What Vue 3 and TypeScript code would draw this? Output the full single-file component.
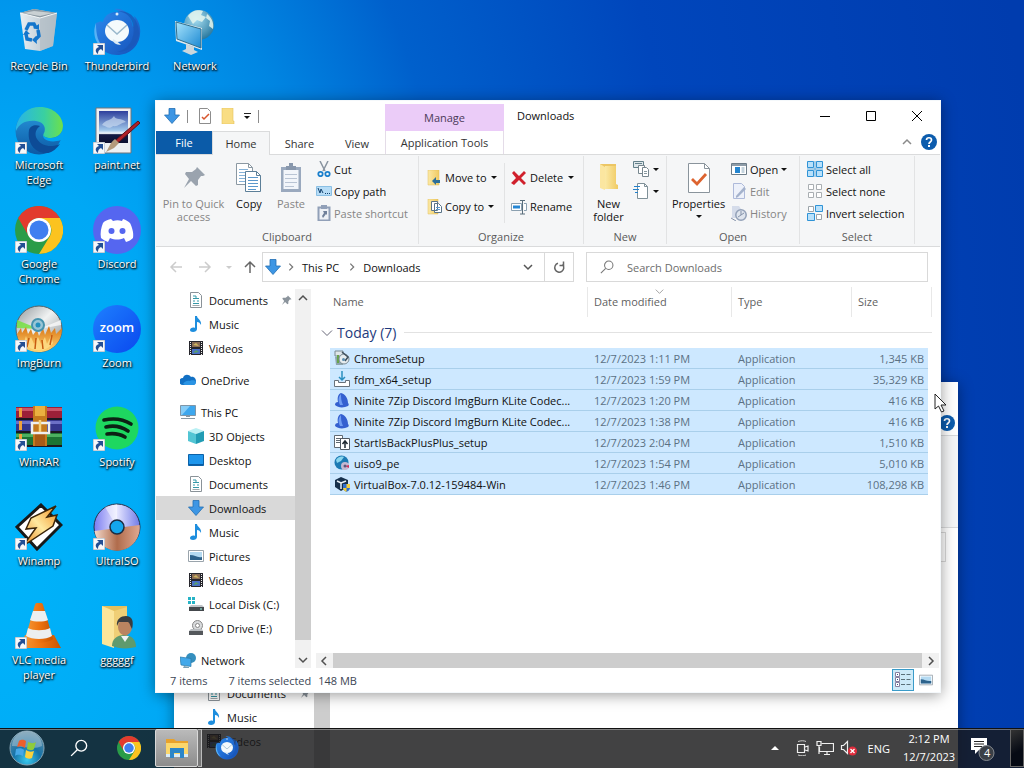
<script setup lang="ts">
import { ref } from 'vue'

interface Shortcut { icon: string; label: string; link: boolean; word?: string }
interface NavItem { icon: string; label: string; level: number; active?: boolean; pinned?: boolean; gap?: boolean }
interface FileRow { icon: string; name: string; date: string; size: string }

const shortcuts: Shortcut[] = [
  { icon: 'bin', label: 'Recycle Bin', link: false },
  { icon: 'edge', label: 'Microsoft Edge', link: true },
  { icon: 'chrome', label: 'Google Chrome', link: true },
  { icon: 'imgburn', label: 'ImgBurn', link: true },
  { icon: 'winrar', label: 'WinRAR', link: true },
  { icon: 'winamp', label: 'Winamp', link: true },
  { icon: 'vlc', label: 'VLC media player', link: true },
  { icon: 'thunderbird', label: 'Thunderbird', link: true },
  { icon: 'paint', label: 'paint.net', link: true },
  { icon: 'discord', label: 'Discord', link: true },
  { icon: 'zoom', label: 'Zoom', link: true, word: 'zoom' },
  { icon: 'spotify', label: 'Spotify', link: true },
  { icon: 'ultraiso', label: 'UltraISO', link: true },
  { icon: 'user', label: 'gggggf', link: false },
  { icon: 'network', label: 'Network', link: false },
]

const nav: NavItem[] = [
  { icon: 's-doc', label: 'Documents', level: 2, pinned: true },
  { icon: 's-music', label: 'Music', level: 2 },
  { icon: 's-video', label: 'Videos', level: 2 },
  { icon: 's-cloud', label: 'OneDrive', level: 1, gap: true },
  { icon: 's-pc', label: 'This PC', level: 1, gap: true },
  { icon: 's-cube', label: '3D Objects', level: 2 },
  { icon: 's-desktop', label: 'Desktop', level: 2 },
  { icon: 's-doc', label: 'Documents', level: 2 },
  { icon: 's-down', label: 'Downloads', level: 2, active: true },
  { icon: 's-music', label: 'Music', level: 2 },
  { icon: 's-pic', label: 'Pictures', level: 2 },
  { icon: 's-video', label: 'Videos', level: 2 },
  { icon: 's-disk', label: 'Local Disk (C:)', level: 2 },
  { icon: 's-cd', label: 'CD Drive (E:)', level: 2 },
  { icon: 's-net', label: 'Network', level: 1, gap: true },
]

const files: FileRow[] = [
  { icon: 'f-setup', name: 'ChromeSetup', date: '12/7/2023 1:11 PM', size: '1,345 KB' },
  { icon: 'f-fdm', name: 'fdm_x64_setup', date: '12/7/2023 1:59 PM', size: '35,329 KB' },
  { icon: 'f-ninite', name: 'Ninite 7Zip Discord ImgBurn KLite Codec...', date: '12/7/2023 1:20 PM', size: '416 KB' },
  { icon: 'f-ninite', name: 'Ninite 7Zip Discord ImgBurn KLite Codec...', date: '12/7/2023 1:38 PM', size: '416 KB' },
  { icon: 'f-start', name: 'StartIsBackPlusPlus_setup', date: '12/7/2023 2:04 PM', size: '1,510 KB' },
  { icon: 'f-iso', name: 'uiso9_pe', date: '12/7/2023 1:54 PM', size: '5,010 KB' },
  { icon: 'f-vbox', name: 'VirtualBox-7.0.12-159484-Win', date: '12/7/2023 1:46 PM', size: '108,298 KB' },
]

const query = ref('')
</script>

<template>
  <div class="desktop">
    <svg class="sprite" aria-hidden="true">
      <defs>
        <linearGradient id="gBin" x1="0" x2="1"><stop offset="0" stop-color="#e8eef2" /><stop offset="1" stop-color="#a9bac6" /></linearGradient>
        <linearGradient id="gEdgeA" x1="0" x2="1"><stop offset="0" stop-color="#28b4e8" /><stop offset=".6" stop-color="#3ad0a0" /><stop offset="1" stop-color="#6ee04a" /></linearGradient>
        <linearGradient id="gEdgeB" x1="0" y1="0" x2="0" y2="1"><stop offset="0" stop-color="#2a9be0" /><stop offset="1" stop-color="#0c59a4" /></linearGradient>
        <linearGradient id="gZoom" x1="0" y1="0" x2="1" y2="1"><stop offset="0" stop-color="#1e80ff" /><stop offset="1" stop-color="#0a48ee" /></linearGradient>
        <linearGradient id="gDisc" x1="0" x2="1" y1="0" y2="1"><stop offset="0" stop-color="#8d9498" /><stop offset=".45" stop-color="#f0f2f2" /><stop offset="1" stop-color="#7e8588" /></linearGradient>
        <linearGradient id="gFire" x1="0" x2="0" y1="0" y2="1"><stop offset="0" stop-color="#d9720f" /><stop offset="1" stop-color="#ffd878" /></linearGradient>
        <linearGradient id="gIsoA" x1="0" x2="1"><stop offset="0" stop-color="#7a7cf0" /><stop offset=".5" stop-color="#e6e6ff" /><stop offset="1" stop-color="#6f7ae8" /></linearGradient>
        <linearGradient id="gIsoB" x1="0" x2="1"><stop offset="0" stop-color="#f2d8ca" /><stop offset=".5" stop-color="#b06c4c" /><stop offset="1" stop-color="#e0a890" /></linearGradient>
        <linearGradient id="gBird" x1="0" x2="1" y1="0" y2="1"><stop offset="0" stop-color="#2c8cf0" /><stop offset="1" stop-color="#1550b8" /></linearGradient>
        <linearGradient id="gScreen" x1="0" x2="1" y1="0" y2="1"><stop offset="0" stop-color="#a8e4fc" /><stop offset="1" stop-color="#1a88d2" /></linearGradient>
        <linearGradient id="gBolt" x1="0" x2="1" y1="1" y2="0"><stop offset="0" stop-color="#e8851e" /><stop offset=".5" stop-color="#ffe9a0" /><stop offset="1" stop-color="#f09022" /></linearGradient>
        <linearGradient id="gCone" x1="0" x2="1"><stop offset="0" stop-color="#f59a3a" /><stop offset=".5" stop-color="#ee7410" /><stop offset="1" stop-color="#c85400" /></linearGradient>
        <linearGradient id="gPaint" x1="0" x2="0" y1="0" y2="1"><stop offset="0" stop-color="#2e3f9c" /><stop offset=".6" stop-color="#9fc6ea" /><stop offset=".7" stop-color="#f4f8fc" /><stop offset=".74" stop-color="#141a44" /><stop offset="1" stop-color="#0c1030" /></linearGradient>
        <linearGradient id="gFolder" x1="0" x2="1"><stop offset="0" stop-color="#fbe9a6" /><stop offset="1" stop-color="#f0ca62" /></linearGradient>
        <radialGradient id="gOrb" cx=".5" cy=".85" r=".8"><stop offset="0" stop-color="#39c9ee" /><stop offset=".5" stop-color="#1673a8" /><stop offset="1" stop-color="#5d8ba4" /></radialGradient>
        <radialGradient id="gGlobe" cx=".4" cy=".3" r=".8"><stop offset="0" stop-color="#a8e0f4" /><stop offset="1" stop-color="#1c6d94" /></radialGradient>
      </defs>

      <!-- desktop icons, 48 units square -->
      <symbol id="bin" viewBox="0 0 48 48">
        <path d="M5 5 19 1l23 4-4 33-13 5-15-2z" fill="url(#gBin)" />
        <path d="M5 5 19 1l23 4-17 5z" fill="#8e9ba4" /><path d="M8 5 19 3l19 2-13 3z" fill="#c9d0d3" />
        <path d="M25 10 42 5l-4 33-13 5z" fill="#b4bec4" opacity=".7" />
        <path d="M5 5l20 5 17-5" fill="none" stroke="#f4f7f9" />
        <path d="M11 22l3-6 5 0 2 4M23 22l1 6-4 4M17 32l-5-1-1-5" fill="none" stroke="#1476cc" stroke-width="3.500" />
        <path d="M18 20l6 2 0-6zM21 28l-4 4 5 4zM8 27l3-5 4 4z" fill="#1476cc" />
      </symbol>
      <symbol id="edge" viewBox="0 0 48 48">
        <circle cx="24" cy="24" r="23.500" fill="url(#gEdgeB)" />
        <path d="M1 20C4 7 13 0 25 0c14 0 23 10 23 19 0 8-6 12-12 12-6 0-8-2-7-5 2-4 1-11-8-12C10 13 4 17 1 24z" fill="url(#gEdgeA)" />
        <path d="M14 23c-2 12 5 24 19 23 5-1 9-5 12-9-9 4-19 2-23-5-3-5-1-10 3-13-5-2-10 0-11 4z" fill="#0d4b96" />
        <path d="M29 26c-4 6 6 11 17 7l2 2V19c0 8-6 12-12 12-6 0-8-2-7-5z" fill="#00a4f2" />
        <path d="M29 26c-2 3 1 5 7 5 5 0 10-3 12-9v-3c0 8-6 12-12 12-6 0-8-2-7-5z" fill="#55dc6a" />
      </symbol>
      <symbol id="chrome" viewBox="0 0 48 48">
        <circle cx="24" cy="24" r="24" fill="#2a9c48" />
        <path d="M3.200 12A24 24 0 0 1 44.800 12H24a12 12 0 0 0-11 7z" fill="#e23b2e" />
        <path d="M44.800 12A24 24 0 0 1 24 48l11-18a12 12 0 0 0-2-14l-9-4z" fill="#fcc31f" />
        <path d="M3.200 12 13.600 30A12 12 0 0 1 24 12z" fill="#e23b2e" />
        <circle cx="24" cy="24" r="12" fill="#fff" /><circle cx="24" cy="24" r="9.500" fill="#3f7ff0" />
      </symbol>
      <symbol id="imgburn" viewBox="0 0 48 48">
        <circle cx="24" cy="24" r="23" fill="url(#gDisc)" stroke="#5b6265" />
        <path d="M24 24 2 15v8z" fill="#6fe23a" opacity=".8" /><path d="M24 24 46 15v5z" fill="#fff" opacity=".7" />
        <path d="M2 29l4-6 1 5 4-6 2 7 3-5 2 6 4-5 2 6 4-8 2 7 4-9 2 7 4-5 1 6 6-6c0 14-10 24-23 24S4 40 2 29z" fill="url(#gFire)" />
        <path d="M9 37l2-6 2 6 3-5 3 7 4-7 3 7 4-7 2 7 4-8 2 7 2-3c-4 7-9 10-16 10S13 43 9 37z" fill="#ffdf88" opacity=".8" />
        <path d="M12 42l2-9M20 44l1-11M28 44l-1-9M35 40l2-10" stroke="#c85a10" stroke-width="1.500" fill="none" />
        <circle cx="23" cy="20" r="6" fill="#9ac6d6" stroke="#4693ae" stroke-width="2" /><circle cx="23" cy="20" r="2.500" fill="#2390be" />
      </symbol>
      <symbol id="winrar" viewBox="0 0 48 48">
        <path d="M1 3h46v12H1z" fill="#9c2038" /><path d="M1 4h46v3H1z" fill="#c9566a" />
        <path d="M1 16h46v12H1z" fill="#34378e" /><path d="M1 17h46v3H1z" fill="#6c70c6" />
        <path d="M1 29h46v13H1z" fill="#1c7434" /><path d="M1 30h46v3H1z" fill="#4cb060" />
        <path d="M1 14h46v2H1zM1 27h46v2H1zM1 41h46v2H1z" fill="#1c1820" />
        <path d="M4 4h3v9H4zM4 17h3v9H4zM4 30h3v9H4z" fill="#f0a23a" />
        <path d="M18 2h14v40H18z" fill="#c57a1e" /><path d="M20 2h10v10H20z" fill="#eab040" /><path d="M20 30h10v12H20z" fill="#a75b16" />
        <path d="M17 19h17v10H17z" fill="none" stroke="#eef0f2" stroke-width="2.500" /><path d="M25 16v12" stroke="#f6d27c" stroke-width="2.500" />
      </symbol>
      <symbol id="winamp" viewBox="0 0 48 48">
        <path d="M26 2 46 22 22 46 2 24z" fill="#fff" stroke="#181818" stroke-width="3" />
        <path d="M41 3 16 15l-5 11 10-1L8 43l30-20 4-11-10 2z" fill="url(#gBolt)" stroke="#3b2408" stroke-width="1.500" />
      </symbol>
      <symbol id="vlc" viewBox="0 0 48 48">
        <path d="M10 33h29l7 13H6z" fill="url(#gCone)" />
        <path d="M22 1h4c2 0 2 2 3 5l9 31c-6 5-22 5-28 0l9-31c1-3 1-5 3-5z" fill="url(#gCone)" />
        <path d="M18 9h12l3 9c-4 2-14 2-18 0zM13 26c5 3 17 3 22 0l2 8c-6 4-20 4-26 0z" fill="#eceff0" />
      </symbol>
      <symbol id="thunderbird" viewBox="0 0 48 48">
        <path d="M3 15c-4 16 4 32 21 32 13 0 22-9 23-21 1-8-2-15-6-18 2 7 0 10-1 11C38 6 30-1 21 1c5 1 5 3 5 3C15 3 11 9 10 14c-3-1-4 0-7 1z" fill="url(#gBird)" />
        <path d="M17 7C26 0 38 5 40 17c3 14-5 25-16 27 14 0 22-10 22-20C45 9 33-3 17 7z" fill="#1a57b8" opacity=".8" />
        <path d="M3 15c0 12 2 20 9 26C2 37-1 25 3 15z" fill="#58b2f6" />
        <ellipse cx="24" cy="23" rx="12" ry="11" fill="#f4fafc" /><path d="M20 31c4 2 6 4 8 6-5 0-9-3-8-6z" fill="#dcebf4" />
        <path d="M14 17l10 9 10-9" fill="none" stroke="#9ab8cc" stroke-width="1.500" /><circle cx="24" cy="6" r="1.500" fill="#d7ecfb" />
      </symbol>
      <symbol id="paint" viewBox="0 0 48 48">
        <path d="M3 1h35v45H3z" fill="#eef0f2" stroke="#70757a" /><path d="M6 4h29v32H6z" fill="url(#gPaint)" />
        <path d="M9 18c4-6 9-4 12-9 2 5 7 1 12 6-6 1-8 5-13 4-4 4-7 0-11-1z" fill="#c8d8f0" opacity=".7" />
        <path d="M45 14 24 32l-3 4 5-1 21-19z" fill="#b02028" stroke="#5f1018" /><path d="M22 32l4 4-5 5-8 4c3-4 3-8 9-13z" fill="#b49a7c" />
      </symbol>
      <symbol id="discord" viewBox="0 0 48 48">
        <circle cx="24" cy="24" r="24" fill="#5566f0" />
        <path d="M18 13c-4 1-7 2-8 4-2 5-3 10-2 15 2 2 5 3 7 4l2-4c5 2 9 2 14 0l2 4c3-1 5-2 7-4 1-5-1-11-3-15-2-2-4-3-7-4l-1 2c-3-1-6-1-9 0z" fill="#fff" />
        <circle cx="18.500" cy="25" r="3" fill="#5566f0" /><circle cx="29.500" cy="25" r="3" fill="#5566f0" />
      </symbol>
      <symbol id="zoom" viewBox="0 0 48 48"><circle cx="24" cy="24" r="24" fill="url(#gZoom)" /></symbol>
      <symbol id="spotify" viewBox="0 0 48 48">
        <circle cx="24" cy="24" r="21.500" fill="#1ed760" />
        <path d="M11 16c9-2 19-1 27 4M13 23c8-2 16 0 22 4M14 30c7-1 13 0 18 3" fill="none" stroke="#0c2014" stroke-width="3.600" stroke-linecap="round" />
      </symbol>
      <symbol id="ultraiso" viewBox="0 0 48 48">
        <circle cx="24" cy="24" r="23" fill="url(#gIsoA)" stroke="#28324a" />
        <path d="M46.500 22a22.500 22.500 0 0 1-45 6z" fill="url(#gIsoB)" /><path d="M24 24 12 4l12-3z" fill="#fff" opacity=".5" />
        <circle cx="24" cy="24" r="7" fill="#14a6ec" stroke="#1d2c40" stroke-width="1.500" />
      </symbol>
      <symbol id="user" viewBox="0 0 48 48">
        <path d="M9 4h25v38H12z" fill="#e5bf5c" /><path d="M9 4l12 5v37L9 42z" fill="#fbe59a" /><path d="M21 9l13-4v37H21z" fill="#f0cf76" />
        <path d="M19 44c0-7 5-11 12-11s12 4 12 12c-8 2-17 2-24-1z" fill="#5f9a6e" /><path d="M28 34l4 6 4-6z" fill="#eef3f4" />
        <ellipse cx="32" cy="25" rx="7" ry="8.500" fill="#b98460" /><path d="M24 24c-1-7 4-10 9-10 6 0 8 5 6 13-2-3-2-6-4-7-4 0-8 0-9 0z" fill="#3a3d40" />
      </symbol>
      <symbol id="network" viewBox="0 0 48 48">
        <circle cx="28" cy="17" r="15" fill="url(#gGlobe)" />
        <path d="M17 8c5-7 12-6 15-5l-2 4 5 2-4 5-5-2-4 4zM36 6c5 4 7 9 6 15l-4-3 1-5-4-3z" fill="#e4f6ee" opacity=".85" />
        <path d="M4 13l27 7v22L5 33z" fill="#dfe9ee" /><path d="M5 14l25 7v19L6 31z" fill="url(#gScreen)" stroke="#31708e" />
        <path d="M15 36l8 3v3l4 2-7 3-9-4 4-2z" fill="#cdd7dc" />
      </symbol>
      <symbol id="arrow-badge" viewBox="0 0 12 12">
        <path d="M0 0h12v12H0z" fill="#f6f8fa" stroke="#9ba7b4" />
        <path d="M4 2h6v6L8 6c-2 1-3 2-3 5C1 8 3 5 6 4z" fill="#234f94" />
      </symbol>

      <!-- navigation and title icons, 16 units square -->
      <symbol id="s-doc" viewBox="0 0 16 16"><path d="M2.500.500h8l3 3v12h-11z" fill="#fff" stroke="#8a9298" /><path d="M5 4h3M5 6.500h6M5 9h2m2 0h2M5 11.500h6M8 4v3" stroke="#3498a8" fill="none" /><path d="M4.500 13.500h7" stroke="#a0a8ac" /></symbol>
      <symbol id="s-music" viewBox="0 0 16 16"><path d="M7 0h2c0 3 5 4 4 9-1-2-2-3-4-3v7c0 2-2 3-4 3s-3-1-3-2c0-2 3-3 5-2z" fill="#1e8ede" /></symbol>
      <symbol id="s-video" viewBox="0 0 16 16"><path d="M1 1h14v14H1z" fill="#26262c" /><path d="M4 2h8v5H4z" fill="#8a6c54" /><path d="M4 9h8v5H4z" fill="#4a70c8" /><path d="M5 5l3-2 3 3z" fill="#d0b860" /><path d="M5 13l3-3 3 2z" fill="#58a068" /><path d="M2.500 2v13M13.500 2v13" stroke="#eee" stroke-dasharray="1 1" /></symbol>
      <symbol id="s-cloud" viewBox="0 0 16 16"><path d="M3 13a3.500 3.500 0 0 1 0-7c1-4 6-4 8-1 3-1 5 2 5 4s-1 4-3 4z" fill="#1170c4" /><path d="M5 13h8c2 0 3-1 3-3-2-3-6-1-6-1-3-1-6 1-7 3z" fill="#2a94e4" /></symbol>
      <symbol id="s-pc" viewBox="0 0 16 16"><path d="M.500 1.500h15v10H.500z" fill="#3da7ee" stroke="#7f96a8" /><path d="M1 2h9L2 11H1z" fill="#86cdf8" /><path d="M1 14.500h14M6 12.500h4" stroke="#8899a4" /></symbol>
      <symbol id="s-cube" viewBox="0 0 16 16"><path d="M0 3l8-3 8 3-8 3z" fill="#b9f0f4" /><path d="M0 3l8 3v10L0 13z" fill="#52c5d4" /><path d="M16 3 8 6v10l8-3z" fill="#219cb4" /></symbol>
      <symbol id="s-desktop" viewBox="0 0 16 16"><path d="M.500 2.500h15v11H.500z" fill="#1e96ec" stroke="#0c62a8" /><path d="M1 12.500h14" stroke="#0a5ca4" /></symbol>
      <symbol id="s-down" viewBox="0 0 16 16"><path d="M5 .500h6V7h4.500L8 15.500.500 7H5z" fill="#3d96e4" stroke="#226fb4" stroke-width=".8" /></symbol>
      <symbol id="s-pic" viewBox="0 0 16 16"><path d="M.500 2.500h15v11H.500z" fill="#fff" stroke="#9aa4ac" /><path d="M2 4h12v8H2z" fill="#b4daf2" /><path d="M2 7c5 0 7 3 12 2v3H2z" fill="#2e638c" /></symbol>
      <symbol id="s-disk" viewBox="0 0 16 16"><path d="M0 1h3v3H0zM4 1h3v3H4zM0 5h3v3H0zM4 5h3v3H4z" fill="#26b3c6" /><path d="M3 9h11l2 2H1z" fill="#c0c4c8" /><path d="M1 11h15v4H1z" fill="#44484c" /><path d="M12 13h2" stroke="#9fe" /></symbol>
      <symbol id="s-cd" viewBox="0 0 16 16"><circle cx="9.500" cy="5.500" r="5" fill="#d8dadc" stroke="#888" /><circle cx="9.500" cy="5.500" r="2" fill="#fff" stroke="#888" /><path d="M3 9h11l1 2H1z" fill="#b8bcc0" /><path d="M1 11h14v4H1z" fill="#54585c" /></symbol>
      <symbol id="s-net" viewBox="0 0 16 16"><circle cx="11" cy="6" r="5" fill="#358fbe" /><path d="M0 5l11 1.500v8L1 13z" fill="#42a8ea" stroke="#2a78a8" stroke-width=".7" /><path d="M4 14l5 1v1H3z" fill="#7ba0b4" /></symbol>
      <symbol id="pin" viewBox="0 0 24 24"><path d="M15 1l8 8-2 1-2 0-3 4 0 5-2 1-5-5-7 7 5-9-4-5 1-2 6 0 4-3z" fill="currentColor" /></symbol>

      <!-- ribbon icons -->
      <symbol id="copy" viewBox="0 0 26 30"><path d="M.500.500h12l4 4v17H.500z" fill="#fff" stroke="#8b98a2" /><path d="M12.500.500v4h4" fill="none" stroke="#8b98a2" /><path d="M3 6.500h9M3 9.500h11M3 12.500h6M3 15.500h6M3 18.500h6" stroke="#85b2d8" /><path d="M9.500 8.500h11l4 4v16h-15z" fill="#fff" stroke="#5c7f98" /><path d="M20.500 8.500v4h4" fill="none" stroke="#5c7f98" /><path d="M12 14.500h10M12 17.500h10M12 20.500h10M12 23.500h10M12 26.500h8" stroke="#5b98cc" /></symbol>
      <symbol id="paste" viewBox="0 0 22 30"><path d="M1 4h20v25H1z" fill="#9aa9be" /><path d="M3.500 7h15v19h-15z" fill="#f2f5fa" /><path d="M5 11.500h12M5 15.500h12M5 19.500h12M5 23.500h9" stroke="#b9c4d4" /><path d="M6 3h3V0h4v3h3v4H6z" fill="#8897ac" /></symbol>
      <symbol id="cut" viewBox="0 0 16 16"><path d="M4 0l5 10M12 0 7 10" stroke="#8994a0" stroke-width="1.500" /><circle cx="4.500" cy="13" r="2.200" fill="none" stroke="#1b7fcc" stroke-width="1.800" /><circle cx="11.500" cy="13" r="2.200" fill="none" stroke="#1b7fcc" stroke-width="1.800" /></symbol>
      <symbol id="path" viewBox="0 0 16 16"><path d="M.500 3.500h15v9H.500z" fill="#b6dcf6" stroke="#8abfe4" /><path d="M2 5l2 5 1-4 2 4M9 10.500h1m1 0h1m1 0h1" stroke="#12406c" fill="none" /></symbol>
      <symbol id="pshort" viewBox="0 0 16 16"><path d="M2.500 2.500h11v13h-11z" fill="#eef1f6" stroke="#91a0b8" stroke-width="2" /><path d="M5 0h6v4H5z" fill="#91a0b8" /><path d="M7 6h4v4l-1-1-3 4-1-2 2-3z" fill="#70809a" /></symbol>
      <symbol id="moveto" viewBox="0 0 16 16"><path d="M1 0h11v15H1z" fill="url(#gFolder)" stroke="#e0bf58" stroke-width=".5" /><path d="M5 11l4-4v3h4v3H9v2z" fill="#2d6f9a" /></symbol>
      <symbol id="copyto" viewBox="0 0 16 16"><path d="M1 0h10v15H1z" fill="url(#gFolder)" stroke="#e0bf58" stroke-width=".5" /><path d="M4.500 2.500h6v9h-6zM7.500 4.500h4l3 3v6h-7z" fill="#fff" stroke="#5a7488" /><path d="M9 8.500h4M9 10.500h4" stroke="#5a98cc" /></symbol>
      <symbol id="delete" viewBox="0 0 16 16"><path d="M3 1l5 5 5-5 2 2-5 5 5 5-2 2-5-5-5 5-3-2 5-5-4-5z" fill="#d0202c" /></symbol>
      <symbol id="rename" viewBox="0 0 16 16"><path d="M.500 4.500h10v7H.500zM13 4.500h2.500v7H13" fill="#fff" stroke="#8ba0b0" /><path d="M2 6.500h7v3H2z" fill="#2486d4" /><path d="M9 1.500h5M9 15h5M11.500 1.500V15" stroke="#5a6e7c" fill="none" /></symbol>
      <symbol id="folder" viewBox="0 0 20 28"><path d="M1 1h16v24H1z" fill="#ecc664" /><path d="M1 1l5 3v23l-5-2z" fill="#fbe6a0" /><path d="M6 3h11v18l2 1v4H6z" fill="url(#gFolder)" /></symbol>
      <symbol id="newitem" viewBox="0 0 16 16"><path d="M.500.500h10v6H.500z" fill="#dfe7ea" stroke="#63808a" /><path d="M2 2.500h7" stroke="#63808a" /><path d="M5.500 4.500h6v8h-6z" fill="#fff" stroke="#77868e" /><path d="M9.500 6.500h4l2 2v7h-6z" fill="#fff" stroke="#77868e" /><path d="M11 10.500h3M11 12.500h3" stroke="#8899a0" /></symbol>
      <symbol id="easy" viewBox="0 0 16 16"><path d="M4.500.500h7l3 3v12h-10z" fill="#fff" stroke="#7f9098" /><path d="M11.500.500v3h3" fill="none" stroke="#7f9098" /><path d="M1 3.500h6M0 6.500h6M2 9.500h3" stroke="#2482cc" /></symbol>
      <symbol id="props" viewBox="0 0 22 30"><path d="M.500.500h16l5 5v24H.500z" fill="#fff" stroke="#8a949c" /><path d="M16.500.500v5h5" fill="none" stroke="#8a949c" /><path d="M4 16l5 5 9-10" fill="none" stroke="#dd6430" stroke-width="2.800" /></symbol>
      <symbol id="open" viewBox="0 0 16 16"><path d="M.500 2.500h15v11H.500z" fill="#fff" stroke="#6c7c88" /><path d="M1 3h14v2H1z" fill="#8e9ca8" /><path d="M4 6h5v6H4z" fill="#2385d0" /><path d="M10.500 7h3m-3 2h3m-3 2h3" stroke="#8aa8bc" /></symbol>
      <symbol id="edit" viewBox="0 0 16 16"><path d="M2.500.500h8l3 3v12h-11z" fill="#edf1fa" stroke="#aebada" /><path d="M5 13 13 4l2 2-8 8-2 1z" fill="#a4b2cc" /></symbol>
      <symbol id="history" viewBox="0 0 16 16"><path d="M1 1h7l2 3v9H1z" fill="#d5dcea" /><circle cx="10" cy="10" r="5.200" fill="#dfe5ee" stroke="#93a1b8" stroke-width="1.500" /><path d="M10 6v4l3-2M10 10l-3 2M0 13l5 3" stroke="#8593aa" fill="none" /></symbol>
      <symbol id="selall" viewBox="0 0 16 16"><path d="M.500.500h6v6h-6zM9.500.500h6v6h-6zM.500 9.500h6v6h-6zM9.500 9.500h6v6h-6z" fill="#b9e1fb" stroke="#2f93d6" /><path d="M8 0v16M0 8h16" stroke="#5aa8dc" /></symbol>
      <symbol id="selnone" viewBox="0 0 16 16"><path d="M1.500 1.500h5v5h-5zM9.500 1.500h5v5h-5zM1.500 9.500h5v5h-5zM9.500 9.500h5v5h-5z" fill="#fff" stroke="#a9aeb2" /></symbol>
      <symbol id="selinv" viewBox="0 0 16 16"><path d="M1.500 1.500h5v5h-5zM9.500 9.500h5v5h-5z" fill="#fff" stroke="#9ba4aa" /><path d="M8.500.500h7v6h-7zM.500 8.500h7v7h-7z" fill="#b9e1fb" stroke="#2f93d6" /></symbol>
      <symbol id="qcheck" viewBox="0 0 16 16"><path d="M2.500.500h8l3 3v12h-11z" fill="#fff" stroke="#8d8d8d" /><path d="M5 9l2 2 5-5" fill="none" stroke="#d8552c" stroke-width="1.500" /></symbol>
      <symbol id="qfolder" viewBox="0 0 16 16"><path d="M2 0h11v13h1v3H2z" fill="#f9dd83" stroke="#e4c45c" stroke-width=".6" /></symbol>

      <!-- file icons -->
      <symbol id="f-setup" viewBox="0 0 16 16"><path d="M1 1h8v5H1z" fill="#dfe6ea" stroke="#7b8a92" /><path d="M1 7h7l1 8H2z" fill="#8ea5ae" /><path d="M3 5h2v8H3z" fill="#67a34a" /><circle cx="10" cy="9" r="5" fill="#e6ecee" stroke="#7a8a94" /><path d="M8 2l6 5-3 4" fill="none" stroke="#40505c" stroke-width="1.500" /><circle cx="9.500" cy="9.500" r="1.500" fill="#5c8cae" /></symbol>
      <symbol id="f-fdm" viewBox="0 0 16 16"><path d="M.500 9.500h4v2h7v-2h4v6H.500z" fill="#fff" stroke="#68727a" /><path d="M8 0v9M5 6l3 3 3-3" stroke="#2a8ec0" stroke-width="1.500" fill="none" /></symbol>
      <symbol id="f-ninite" viewBox="0 0 16 16"><path d="M7 1c4 1 7 5 7 10 1 1 1 2 0 3-4 2-10 2-13-1 0-2 1-3 3-3C3 6 4 2 7 1z" fill="#3460d0" /><path d="M7 2C4 5 4 9 6 13h3C7 9 7 5 7 2z" fill="#6f9cf2" /></symbol>
      <symbol id="f-start" viewBox="0 0 16 16"><path d="M.500 1.500h8v12h-8z" fill="#fff" stroke="#606a72" /><path d="M2 4.500h5M2 6.500h5M2 8.500h5" stroke="#606a72" /><path d="M6.500 4.500h9v11h-9z" fill="#fff" stroke="#505860" /><path d="M11 14V8M8.500 10 11 7l2.500 3" stroke="#1f2830" stroke-width="1.500" fill="none" /></symbol>
      <symbol id="f-iso" viewBox="0 0 16 16"><circle cx="7.500" cy="7.500" r="7" fill="#1c7ab4" /><path d="M2 5c3-5 8-3 8-3L7 6 3 8z" fill="#8ad6ee" /><circle cx="11" cy="11" r="4" fill="#c4b8d2" /><path d="M11 11l4-1v3z" fill="#d0325c" /><circle cx="11" cy="11" r="1.500" fill="#5d587c" /></symbol>
      <symbol id="f-vbox" viewBox="0 0 16 16"><path d="M1 4l6-3 7 3v7l-7 4-6-4z" fill="#16304c" /><path d="M3 5l4 2 5-2M7 7v6" stroke="#e8f0f6" stroke-width="1.500" fill="none" /><path d="M9 8h7v4c0 2-2 3-3.500 4C11 15 9 14 9 12z" fill="#2f6fd0" /><path d="M12.500 8H16v4h-3.500zM9 12h3.500v4C11 15 9 14 9 12z" fill="#f3cf3c" /></symbol>

      <!-- system glyphs -->
      <symbol id="search" viewBox="0 0 16 16"><circle cx="10" cy="6" r="4.800" fill="none" stroke="currentColor" stroke-width="1.200" /><path d="M6.500 9.500 1 15" stroke="currentColor" stroke-width="1.200" /></symbol>
      <symbol id="chev-d" viewBox="0 0 12 12"><path d="M2 4l4 4 4-4" fill="none" stroke="currentColor" stroke-width="1.500" /></symbol>
      <symbol id="chev-thin" viewBox="0 0 12 12"><path d="M1 3.500l5 5 5-5" fill="none" stroke="currentColor" /></symbol>
      <symbol id="arr" viewBox="0 0 16 16"><path d="M14 8H3M8 3 3 8l5 5" fill="none" stroke="currentColor" stroke-width="1.500" /></symbol>
      <symbol id="refresh" viewBox="0 0 14 14"><path d="M10.500 4.500A4.500 4.500 0 1 1 6 3.300" fill="none" stroke="currentColor" stroke-width="1.500" /><path d="M11.500 1.500v4h-4" fill="none" stroke="currentColor" stroke-width="1.500" /></symbol>
      <symbol id="help" viewBox="0 0 16 16"><circle cx="8" cy="8" r="8" fill="#0c5cad" /><path d="M5.500 6c0-3 5-3 5 0 0 2-2.500 2-2.500 4" fill="none" stroke="#fff" stroke-width="1.700" /><path d="M7 11h2v2H7z" fill="#fff" /></symbol>
      <symbol id="details" viewBox="0 0 16 16"><path d="M.500.500h4v4h-4zM.500 5.500h4v4h-4zM.500 10.500h4v4h-4z" fill="#fff" stroke="#877fa0" /><path d="M2 2.500h1M2 7.500h1M2 12.500h1" stroke="#28528c" /><path d="M6 2.500h4m1.500 0h4M6 7.500h4m1.500 0h4M6 12.500h4m1.500 0h4" stroke="#5a7078" /></symbol>
      <symbol id="orb" viewBox="0 0 36 36"><circle cx="18" cy="18" r="17" fill="url(#gOrb)" stroke="#86a6b6" /><path d="M3 16a15 15 0 0 1 30 0c-8 4-20 0-30 0z" fill="#cfdfe8" opacity=".4" /><path d="M10 11c3-2 5-1 7 0l-1 7c-3-2-5-2-8-1z" fill="#ec5f2c" /><path d="M19 12c3 1 5 2 8 0l-2 7c-2 2-5 1-7 0z" fill="#8ecb3c" /><path d="M7 19c3-1 6-1 8 1l-1 6c-3-1-5-2-8 0z" fill="#46a8e8" /><path d="M17 20c3 2 5 2 8 1l-2 7c-2 1-5 1-7-1z" fill="#fbd23c" /></symbol>
      <symbol id="explorer" viewBox="0 0 26 22"><path d="M2 2h8l2 2h12v16H2z" fill="#e8a22c" /><path d="M2 6h22v14H2z" fill="#fbd76c" /><path d="M2 17h22v3H2z" fill="#d9ecf8" /><path d="M6 11h14v10h-4v-5h-6v5H6z" fill="#2b86c8" /></symbol>
      <symbol id="camera" viewBox="0 0 16 16"><path d="M3.500 4.500h7v8h-7zM11 7l3-1v5l-3-1" fill="none" stroke="#eee" stroke-width="1.200" /><path d="M4 1.500c3-1 6-1 8 0M4 15c3 1 6 1 8 0" stroke="#ccc" fill="none" /></symbol>
      <symbol id="lan" viewBox="0 0 18 16"><path d="M5.500 3.500h12v8H3.500V7M8 14.500h6M11 12v2" fill="none" stroke="#eee" stroke-width="1.200" /><path d="M1 1.500h4v4H1zM3 6v8" fill="none" stroke="#eee" stroke-width="1.200" /></symbol>
      <symbol id="mute" viewBox="0 0 18 16"><path d="M1.500 5.500h2l4-4v12l-4-4h-2z" fill="none" stroke="#eee" stroke-width="1.200" /><circle cx="12.500" cy="11" r="4.500" fill="#e02c3c" /><path d="M10.500 9l4 4m0-4-4 4" stroke="#fff" stroke-width="1.300" /></symbol>
      <symbol id="note" viewBox="0 0 26 26"><path d="M2 3h16v12h-8l-4 4v-4H2z" fill="#fff" /><path d="M5 6.500h10M5 9h10M5 11.500h8" stroke="#222" /><circle cx="17.500" cy="18" r="7.500" fill="#3a3f46" stroke="#858a90" /></symbol>
      <symbol id="cursor" viewBox="0 0 14 20"><path d="M1 1v15l3.500-3 3 6 2.500-1-3-6h5z" fill="#fff" stroke="#222" /></symbol>
    </svg>

    <nav class="shortcuts" aria-label="Desktop">
      <button v-for="s in shortcuts" :key="s.label" class="shortcut">
        <span class="pic">
          <svg class="i48"><use :href="'#' + s.icon" /></svg>
          <span v-if="s.word" class="word">{{ s.word }}</span>
          <svg v-if="s.link" class="badge"><use href="#arrow-badge" /></svg>
        </span>
        <span>{{ s.label }}</span>
      </button>
    </nav>

    <section class="window back" aria-label="File Explorer">
      <div class="back-head"><svg class="i16"><use href="#help" /></svg></div>
      <div class="back-ribbon"></div>
      <div class="back-addr"><div></div></div>
      <div class="back-body">
        <div class="back-nav">
          <div class="nav-item l2"><svg class="i16"><use href="#s-doc" /></svg><span>Documents</span><svg class="nav-pin"><use href="#pin" /></svg></div>
          <div class="nav-item l2"><svg class="i16"><use href="#s-music" /></svg><span>Music</span></div>
          <div class="nav-item l2"><svg class="i16"><use href="#s-video" /></svg><span>Videos</span></div>
        </div>
        <div class="back-bar"></div>
      </div>
    </section>

    <main class="window front">
      <header class="head">
        <div class="head-left">
          <div class="quick">
            <svg class="i16"><use href="#s-down" /></svg><i class="tick first"></i>
            <button aria-label="Properties"><svg class="i16"><use href="#qcheck" /></svg></button>
            <button aria-label="New folder"><svg class="i16"><use href="#qfolder" /></svg></button>
            <button class="custom" aria-label="Customize"><span></span><b class="caret"></b></button><i class="tick"></i>
          </div>
          <div class="tabs">
            <button class="tab file">File</button>
            <button class="tab home">Home</button>
            <button class="tab">Share</button>
            <button class="tab view">View</button>
          </div>
        </div>
        <div class="context">
          <div class="manage">Manage</div>
          <button class="tab tools">Application Tools</button>
        </div>
        <div class="head-right">
          <div class="title"><h1>Downloads</h1>
            <div class="controls">
              <button aria-label="Minimize"><svg class="i12"><path d="M1 6.500h10" stroke="#000" /></svg></button>
              <button aria-label="Maximize"><svg class="i12"><path d="M1.500 1.500h9v9h-9z" fill="none" stroke="#000" /></svg></button>
              <button aria-label="Close"><svg class="i12"><path d="M1 1l10 10M11 1 1 11" fill="none" stroke="#000" /></svg></button>
            </div>
          </div>
          <div class="helpers">
            <button class="collapse" aria-label="Collapse"><svg class="i12"><use href="#chev-d" /></svg></button>
            <button aria-label="Help"><svg class="i16"><use href="#help" /></svg></button>
          </div>
        </div>
      </header>

      <div class="ribbon">
        <section class="group clipboard">
          <div class="tools-row">
            <button class="big off pinq"><svg class="i24"><use href="#pin" /></svg><span>Pin to Quick access</span></button>
            <button class="big"><svg class="icopy"><use href="#copy" /></svg><span>Copy</span></button>
            <button class="big off"><svg class="ipaste"><use href="#paste" /></svg><span>Paste</span></button>
            <div class="stack">
              <button class="small"><svg class="i16"><use href="#cut" /></svg>Cut</button>
              <button class="small"><svg class="i16"><use href="#path" /></svg>Copy path</button>
              <button class="small off"><svg class="i16"><use href="#pshort" /></svg>Paste shortcut</button>
            </div>
          </div>
          <h2>Clipboard</h2>
        </section>
        <section class="group organize">
          <div class="tools-row">
            <div class="stack pair">
              <button class="small"><svg class="i16"><use href="#moveto" /></svg>Move to<b class="caret"></b></button>
              <button class="small"><svg class="i16"><use href="#copyto" /></svg>Copy to<b class="caret"></b></button>
            </div>
            <div class="stack pair ruled">
              <button class="small"><svg class="i16"><use href="#delete" /></svg>Delete<b class="caret"></b></button>
              <button class="small"><svg class="i16"><use href="#rename" /></svg>Rename</button>
            </div>
          </div>
          <h2>Organize</h2>
        </section>
        <section class="group new">
          <div class="tools-row">
            <button class="big"><svg class="ifolder"><use href="#folder" /></svg><span>New folder</span></button>
            <div class="stack">
              <button class="small" aria-label="New item"><svg class="i16"><use href="#newitem" /></svg><b class="caret"></b></button>
              <button class="small" aria-label="Easy access"><svg class="i16"><use href="#easy" /></svg><b class="caret"></b></button>
            </div>
          </div>
          <h2>New</h2>
        </section>
        <section class="group opens">
          <div class="tools-row">
            <button class="big"><svg class="ipaste"><use href="#props" /></svg><span>Properties</span><b class="caret"></b></button>
            <div class="stack">
              <button class="small"><svg class="i16"><use href="#open" /></svg>Open<b class="caret"></b></button>
              <button class="small off"><svg class="i16"><use href="#edit" /></svg>Edit</button>
              <button class="small off"><svg class="i16"><use href="#history" /></svg>History</button>
            </div>
          </div>
          <h2>Open</h2>
        </section>
        <section class="group select">
          <div class="tools-row">
            <div class="stack">
              <button class="small"><svg class="i16"><use href="#selall" /></svg>Select all</button>
              <button class="small"><svg class="i16"><use href="#selnone" /></svg>Select none</button>
              <button class="small"><svg class="i16"><use href="#selinv" /></svg>Invert selection</button>
            </div>
          </div>
          <h2>Select</h2>
        </section>
      </div>

      <div class="address">
        <div class="history">
          <button class="dim" aria-label="Back"><svg class="i16"><use href="#arr" /></svg></button>
          <button class="dim" aria-label="Forward"><svg class="i16 flip"><use href="#arr" /></svg></button>
          <button class="dim recent" aria-label="Recent"><b class="caret"></b></button>
          <button aria-label="Up"><svg class="i16 up"><use href="#arr" /></svg></button>
        </div>
        <div class="crumbs">
          <svg class="i16"><use href="#s-down" /></svg>
          <svg class="i12 right"><use href="#chev-d" /></svg><a href="#">This PC</a>
          <svg class="i12 right"><use href="#chev-d" /></svg><a href="#">Downloads</a>
          <button class="drop" aria-label="Previous locations"><svg class="i12"><use href="#chev-d" /></svg></button>
          <button class="reload" aria-label="Refresh"><svg class="i14"><use href="#refresh" /></svg></button>
        </div>
        <label class="find"><svg class="i14"><use href="#search" /></svg><input v-model="query" type="text" placeholder="Search Downloads" aria-label="Search Downloads" /></label>
      </div>

      <div class="body">
        <nav class="side" aria-label="Folders">
          <a v-for="(n, i) in nav" :key="i" href="#" class="nav-item" :class="['l' + n.level, { active: n.active, gap: n.gap }]">
            <svg class="i16"><use :href="'#' + n.icon" /></svg><span>{{ n.label }}</span>
            <svg v-if="n.pinned" class="nav-pin"><use href="#pin" /></svg>
          </a>
        </nav>
        <div class="vbar"><svg class="i12 flip"><use href="#chev-d" /></svg><i></i><svg class="i12"><use href="#chev-d" /></svg></div>
        <div class="list">
          <table>
            <colgroup><col class="c-gutter" /><col /><col class="c-date" /><col class="c-type" /><col class="c-size" /><col class="c-end" /></colgroup>
            <thead>
              <tr><th></th><th class="h-name">Name</th><th class="h sorted">Date modified<svg class="sort"><use href="#chev-thin" /></svg></th><th class="h">Type</th><th class="h">Size</th><th class="h-end"></th></tr>
            </thead>
            <tbody>
              <tr class="today"><th colspan="6"><div><svg class="i12"><use href="#chev-thin" /></svg><span>Today (7)</span><i></i></div></th></tr>
              <tr v-for="(f, i) in files" :key="i" class="row">
                <td></td>
                <td class="name"><div><svg class="i16"><use :href="'#' + f.icon" /></svg><span>{{ f.name }}</span></div></td>
                <td class="meta">{{ f.date }}</td><td class="meta">Application</td><td class="meta num">{{ f.size }}</td><td></td>
              </tr>
            </tbody>
          </table>
          <div class="hbar"><svg class="i12 left"><use href="#chev-d" /></svg><i></i><svg class="i12 right"><use href="#chev-d" /></svg></div>
        </div>
      </div>

      <footer class="status">
        <span>7 items</span><span class="sel">7 items selected</span><span>148 MB</span>
        <div class="views">
          <button class="on" aria-label="Details"><svg class="i16"><use href="#details" /></svg></button>
          <button aria-label="Large icons"><svg class="i14"><use href="#s-pic" /></svg></button>
        </div>
      </footer>
    </main>

    <svg class="cursor"><use href="#cursor" /></svg>

    <footer class="taskbar">
      <button class="start" aria-label="Start"><svg class="i36"><use href="#orb" /></svg></button>
      <button class="task" aria-label="Search"><svg class="i18"><use href="#search" /></svg></button>
      <button class="task" aria-label="Google Chrome"><svg class="i24"><use href="#chrome" /></svg></button>
      <button class="task current" aria-label="File Explorer"><svg class="iexp"><use href="#explorer" /></svg></button>
      <i class="stacked"></i>
      <button class="task" aria-label="Thunderbird"><svg class="i24"><use href="#thunderbird" /></svg></button>
      <div class="tray">
        <button class="tri" aria-label="Hidden icons"><b class="caret"></b></button>
        <svg class="i16"><use href="#camera" /></svg>
        <svg class="i18"><use href="#lan" /></svg>
        <svg class="i18"><use href="#mute" /></svg>
        <span class="lang">ENG</span>
        <time>2:12 PM<br />12/7/2023</time>
        <button class="notes" aria-label="Notifications"><svg class="i26"><use href="#note" /></svg><b>4</b></button>
        <button class="peek" aria-label="Show desktop"></button>
      </div>
    </footer>
  </div>
</template>

<style>
html, body { margin: 0; overflow: hidden; }
</style>

<style scoped>
.desktop {
  position: relative; height: 100vh; overflow: hidden; color: #111;
  font: 11px/15px "Open Sans", "Noto Sans", sans-serif;
  background: radial-gradient(ellipse 700px 1300px at 0 70%, #00b4fa 0, #00a8f5 28%, #0098ee 40%, #0086e2 52%, #0060cc 69%, #0046bc 100%, #003cae 150%);
}
* { box-sizing: border-box; }
button { font: inherit; color: inherit; background: none; border: 0; padding: 0; margin: 0; display: flex; align-items: center; justify-content: center; }
a { color: inherit; text-decoration: none; }
svg { flex: none; display: block; }
h1, h2 { margin: 0; font: inherit; }
.sprite { position: absolute; width: 0; height: 0; }
.i12 { width: 12px; height: 12px; } .i14 { width: 14px; height: 14px; } .i16 { width: 16px; height: 16px; }
.i18 { width: 18px; height: 18px; } .i24 { width: 24px; height: 24px; } .i26 { width: 26px; height: 26px; }
.i36 { width: 36px; height: 36px; } .i48 { width: 48px; height: 48px; }
.caret { width: 0; height: 0; border: 3px solid transparent; border-top-color: currentColor; border-bottom: 0; }

.shortcuts { display: grid; grid-template-rows: repeat(7, 99px); grid-auto-flow: column; grid-auto-columns: 78px; justify-content: start; }
.shortcut { flex-direction: column; justify-content: flex-start; padding: 8px 4px 0; color: #fff; text-shadow: 1px 1px 2px #000, 0 1px 2px #000; }
.pic { position: relative; margin-bottom: 2px; }
.badge { position: absolute; left: 0; bottom: 1px; width: 12px; height: 12px; }
.word { position: absolute; left: 0; right: 0; top: 14px; text-align: center; font-size: 13px; line-height: 16px; font-weight: 600; text-shadow: none; }

.window { position: absolute; display: flex; flex-direction: column; background: #fff; box-shadow: 0 2px 14px rgba(0, 0, 0, .4); }
.back { left: 174px; right: 66px; top: 382px; bottom: 0; }
.front { left: 155px; right: 83px; top: 100px; bottom: 75px; border: 1px solid #f4f8fb; }
.back-head { height: 54px; display: flex; justify-content: flex-end; padding: 33px 3px 0; border-bottom: 1px solid #d8dadc; }
.back-ribbon { height: 92px; background: #f5f6f7; border-bottom: 1px solid #dadbdc; }
.back-addr { height: 40px; padding: 4px 12px 6px; }
.back-addr div { height: 30px; border: 1px solid #d9d9d9; }
.back-body { flex: 1; display: flex; padding-top: 113px; }
.back-nav { width: 140px; }
.back-bar { width: 16px; background: #cdcdcd; }

.head { display: flex; height: 54px; border-bottom: 1px solid #dadbdc; }
.head-left { width: 229px; }
.quick { display: flex; align-items: center; height: 30px; padding-left: 8px; gap: 7px; }
.tick { width: 1px; height: 13px; background: #8c8c8c; }
.first { margin-right: 2px; }
.custom { flex-direction: column; gap: 2px; width: 8px; }
.custom span { width: 7px; height: 1px; background: #222; }
.tabs { display: flex; height: 24px; }
.tab { width: 59px; height: 24px; color: #333; }
.file { width: 56px; background: #0b5ba8; color: #fff; height: 23px; }
.home { width: 58px; background: #f5f6f7; border: 1px solid #dadbdc; border-bottom: 0; }
.view { width: 56px; }
.context { width: 119px; display: flex; flex-direction: column; padding-top: 3px; }
.manage { height: 27px; display: flex; align-items: center; justify-content: center; background: #ebccf8; color: #4c3a58; }
.tools { width: auto; height: 23px; border: solid #e4dce8; border-width: 0 1px; }
.head-right { flex: 1; display: flex; flex-direction: column; }
.title { display: flex; align-items: center; height: 29px; padding-left: 13px; }
h1 { flex: 1; }
.controls { display: flex; }
.controls button { width: 46px; height: 29px; }
.helpers { display: flex; justify-content: flex-end; align-items: center; gap: 8px; height: 24px; padding-right: 3px; }
.collapse { transform: rotate(180deg); color: #8a8a8a; }

.ribbon { display: flex; height: 92px; background: #f5f6f7; border-bottom: 1px solid #dadbdc; padding-top: 1px; }
.group { display: flex; flex-direction: column; border-right: 1px solid #e2e3e4; margin-bottom: 2px; }
.group h2 { text-align: center; color: #5a5a5a; line-height: 15px; }
.tools-row { display: flex; flex: 1; }
.clipboard { width: 263px; } .organize { width: 165px; } .new { width: 83px; } .opens { width: 133px; } .select { width: 115px; }
.big { flex: none; flex-direction: column; justify-content: flex-start; width: 42px; padding-top: 7px; line-height: 13px; }
.big svg { margin-bottom: 4px; }
.big .caret { margin-top: 5px; }
.pinq { width: 69px; margin-left: 3px; }
.pinq svg { margin: 3px 0 7px; color: #9aa3ae; }
.icopy { width: 26px; height: 30px; } .ipaste { width: 22px; height: 30px; } .ifolder { width: 20px; height: 28px; }
.new .big { width: 49px; } .new .ifolder { margin-bottom: 6px; }
.opens .big { width: 63px; }
.off { color: #858585; }
.stack { display: flex; flex-direction: column; padding-top: 2px; }
.small { height: 22px; gap: 4px; justify-content: flex-start; }
.clipboard .stack { padding-left: 4px; } .opens .stack { padding-left: 1px; } .select .stack { padding-left: 7px; }
.clipboard .small, .opens .small, .select .small { gap: 3px; }
.clipboard .small { gap: 2px; }
.pair { flex: none; padding: 7px 0 0 8px; width: 85px; }
.pair .small { height: 29px; gap: 2px; }
.pair .caret { margin-left: 2px; }
.ruled { position: relative; width: 79px; padding-left: 7px; }
.ruled .small { gap: 3px; }
.ruled::before { content: ""; position: absolute; left: 0; top: 7px; bottom: 6px; width: 1px; background: #e2e3e4; }

.address { display: flex; height: 40px; padding: 5px 12px 5px 0; }
.history { display: flex; width: 106px; color: #666; padding-left: 12px; gap: 13px; }
.dim { color: #ccc; }
.recent { width: 6px; }
.history button:last-child { margin-left: -3px; }
.flip { transform: rotate(180deg); } .up { transform: rotate(90deg); }
.right { transform: rotate(-90deg); } .left { transform: rotate(90deg); }
.crumbs { display: flex; align-items: center; flex: 312 1 312px; min-width: 0; border: 1px solid #d9d9d9; padding-left: 2px; }
.crumbs .right { margin: 0 6px 0 5px; color: #777; width: 10px; }
.crumbs a { margin-right: 3px; }
.drop { margin-left: auto; width: 32px; height: 28px; color: #555; }
.reload { width: 29px; height: 28px; border-left: 1px solid #d9d9d9; color: #666; }
.find { display: flex; align-items: center; flex: 342 1 342px; min-width: 0; margin-left: 12px; border: 1px solid #d9d9d9; padding-left: 13px; gap: 13px; color: #777; }
.find input { flex: 1; min-width: 0; border: 0; padding: 0; outline: 0; font: inherit; background: none; }
.find input::placeholder { color: #6d6d6d; opacity: 1; }

.body { flex: 1; min-height: 0; display: flex; }
.side { width: 139px; padding-top: 1px; overflow: hidden; }
.nav-item { display: flex; align-items: center; height: 24px; gap: 5px; }
.l1 { padding-left: 24px; } .l2 { padding-left: 32px; }
.gap { margin-top: 8px; }
.active { background: #d9d9d9; }
.nav-pin { width: 11px; height: 11px; color: #8b949c; margin-left: auto; margin-right: 3px; }
.vbar { width: 16px; background: #f1f1f1; display: flex; flex-direction: column; align-items: center; padding: 3px 0 2px; margin: 2px 0 1px; color: #505050; }
.vbar i { width: 16px; flex: 1; margin: 76px 0 14px; background: #cdcdcd; }
.list { flex: 1; min-width: 0; display: flex; flex-direction: column; justify-content: space-between; }
table { margin: 0 8px 0 9px; border-collapse: separate; border-spacing: 0; table-layout: fixed; }
.c-gutter { width: 10px; } .c-date { width: 144px; } .c-type { width: 120px; } .c-size { width: 77px; } .c-end { width: 4px; }
th { font-weight: normal; text-align: left; padding: 0; }
thead th { height: 30px; padding-bottom: 2px; color: #5f5f5f; }
.h-name { padding-left: 3px; }
.h { position: relative; border-left: 1px solid #e8e8e8; padding-left: 6px; }
.h-end { border-right: 1px solid #e8e8e8; }
.sort { position: absolute; left: 67px; top: 0; width: 9px; height: 9px; color: #888; }
.today div { display: flex; align-items: center; height: 31px; padding-left: 1px; color: #1e3a7c; font-size: 14px; }
.today span { margin: 0 8px 0 4px; }
.today i { flex: 1; height: 1px; background: #e2e2e2; }
.today svg { color: #667; }
.row td { height: 21px; padding: 0; }
.row td:not(:first-child):not(:last-child) { background: #cde8ff; border-bottom: 1px solid #a9cfeb; }
.name div { display: flex; align-items: center; gap: 4px; padding-left: 4px; white-space: nowrap; overflow: hidden; }
.row .meta { padding-left: 7px; color: #5b7184; white-space: nowrap; }
.row .num { text-align: right; padding: 0 4px 0 0; }
.hbar { display: flex; align-items: center; height: 15px; background: #f1f1f1; margin: 0 1px 1px 5px; color: #505050; padding: 0 2px; }
.hbar i { flex: 1; height: 15px; margin: 0 3px; background: #cdcdcd; }

.status { display: flex; align-items: center; height: 23px; padding: 0 6px 1px 14px; color: #3c4654; }
.sel { margin: 0 7px 0 21px; }
.views { margin-left: auto; display: flex; gap: 4px; }
.views button { height: 22px; width: 16px; }
.views .on { width: 22px; background: #cdeaf8; border: 1px solid #3a9bc8; }

.cursor { position: absolute; right: 76px; top: 393px; width: 14px; height: 20px; }

.taskbar { position: absolute; left: 0; right: 0; bottom: 0; height: 40px; display: flex; align-items: stretch; color: #fff; background: rgba(24, 24, 26, .82); border-top: 1px solid #111; padding-bottom: 1px; box-shadow: inset 0 1px 0 rgba(255, 255, 255, .35); }
.start { width: 54px; }
.task { width: 50px; }
.current { width: 43px; margin-left: 1px; border: 1px solid #d8d8d8; border-radius: 2px; background: linear-gradient(#bababa, #8c8c8c); }
.iexp { width: 26px; height: 22px; }
.stacked { width: 4px; border: 1px solid #bbb; border-left: 0; background: #777; }
.tray { margin-left: auto; display: flex; align-items: center; gap: 6px; }
.tri { width: 24px; margin-right: 1px; }
.tri .caret { transform: rotate(180deg); border-width: 4px; border-bottom: 0; }
.lang { margin-left: 4px; }
time { width: 66px; margin-right: -3px; text-align: center; line-height: 18px; }
.notes { position: relative; width: 34px; height: 38px; margin-right: 5px; }
.notes b { position: absolute; left: 19px; top: 16px; font-weight: normal; }
.peek { width: 14px; align-self: stretch; border: 1px solid #666; background: linear-gradient(150deg, #333, #060a14 60%); }
</style>
